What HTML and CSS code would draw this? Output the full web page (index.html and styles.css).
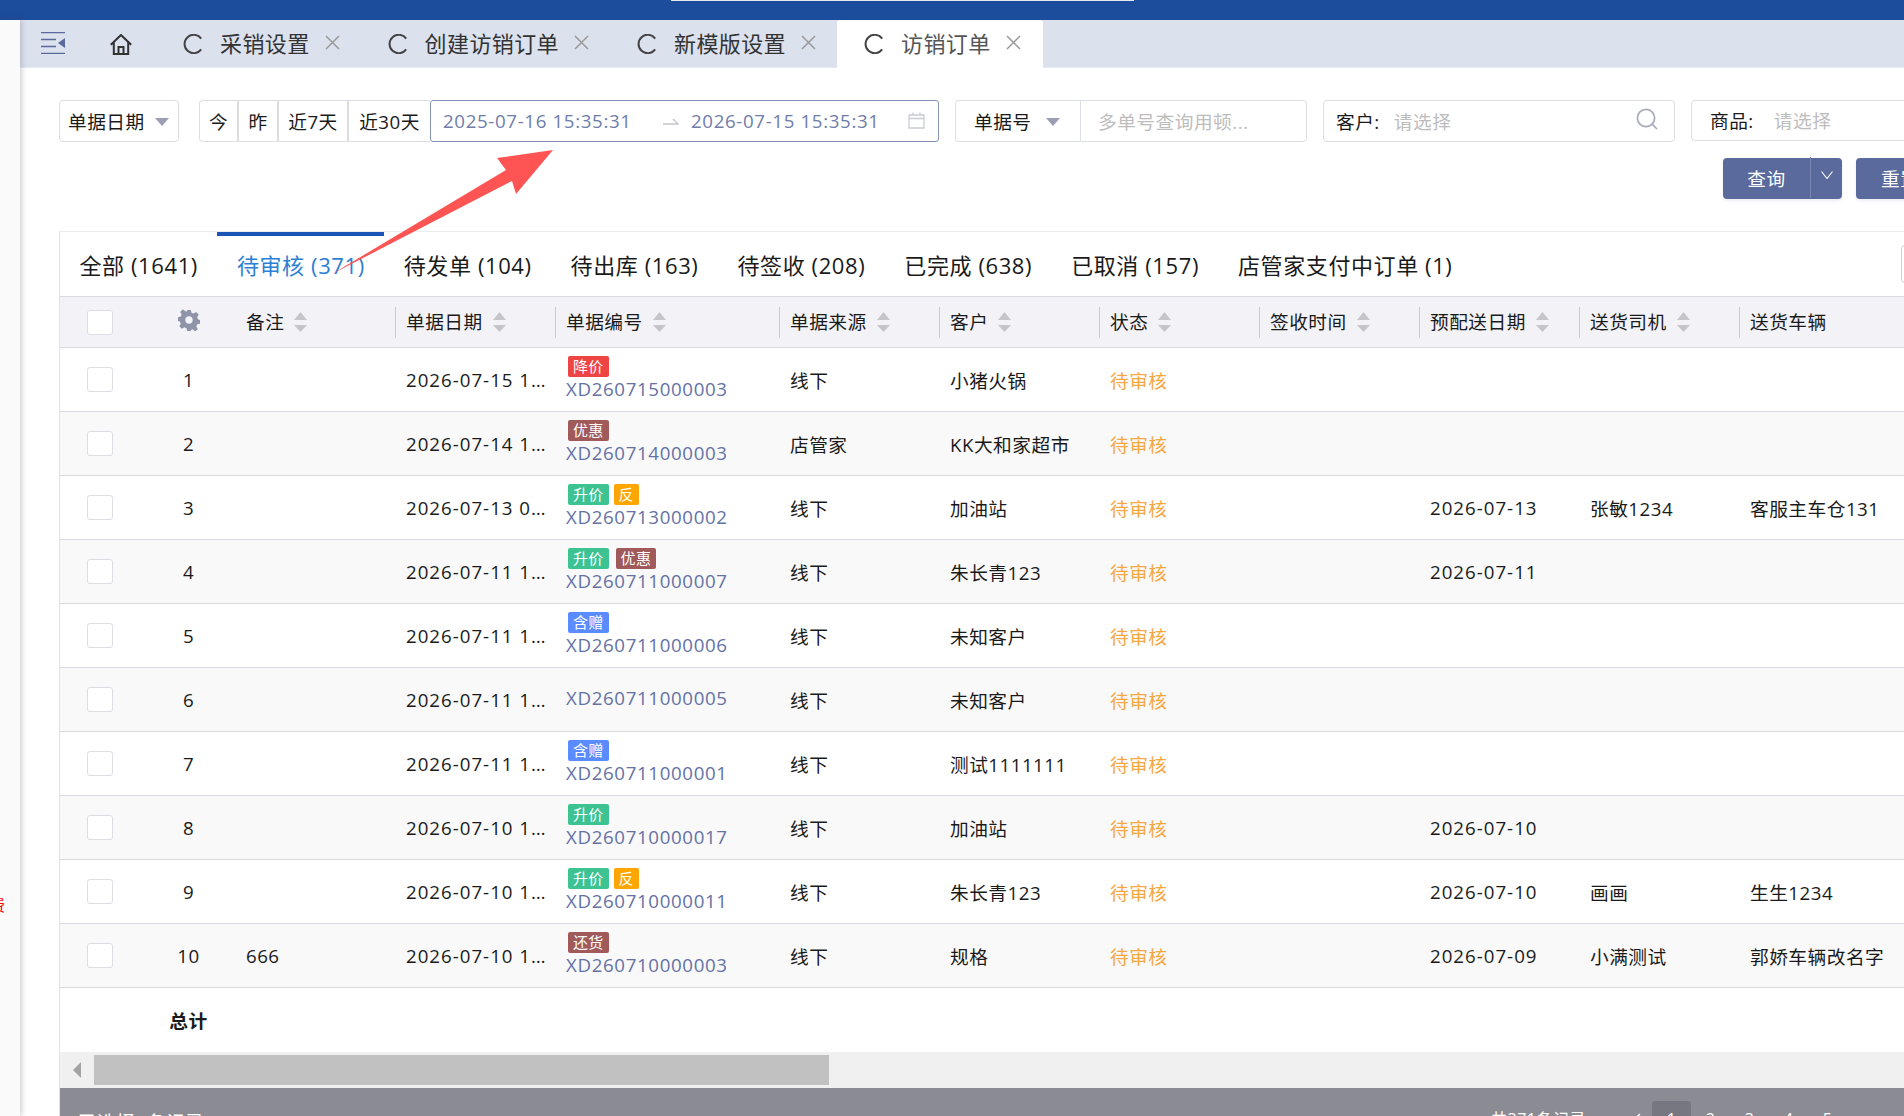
FILE: index.html
```html
<!DOCTYPE html>
<html lang="zh-CN">
<head>
<meta charset="utf-8">
<title>访销订单</title>
<link rel="stylesheet" href="styles.css">
</head>
<body>
<svg width="0" height="0" class="defs">
  <symbol id="i-c" viewBox="0 0 20 20"><path d="M18.200 4.600A9.200 9.200 0 1 0 18.200 15.400" fill="none" stroke="currentColor" stroke-width="2"/></symbol>
  <symbol id="i-x" viewBox="0 0 15 15"><path d="M1 1L14 14M14 1L1 14" fill="none" stroke="currentColor" stroke-width="1.5"/></symbol>
  <symbol id="i-sort" viewBox="0 0 13 20"><path d="M6.5 0L13 8H0Z M0 13H13L6.5 20Z" fill="#c6c6ca"/></symbol>
</svg>
<div class="topbar"><div class="topline"></div></div>
<div class="app">
  <aside class="side"><span class="frag">费</span></aside>
  <main class="main">
    <nav class="tabbar">
      <svg class="menu" width="24" height="22" viewBox="0 0 24 22"><path d="M0 .5H24M0 7.5H15M0 14.5H15M0 21.5H24" stroke="#5b6a9c" stroke-width="1.4" fill="none"/><path d="M24 6V16L17 11Z" fill="#5b6a9c"/></svg>
      <svg class="home" width="22" height="21" viewBox="0 0 22 21"><path d="M.8 10.800L11 1L21.200 10.800M3.800 8V20H18.200V8M8.500 20V13H13.500V20" fill="none" stroke="#333" stroke-width="2"/></svg>
      <div class="tab"><svg class="ic"><use href="#i-c"/></svg><span>采销设置</span><svg class="ix"><use href="#i-x"/></svg></div>
      <div class="tab"><svg class="ic"><use href="#i-c"/></svg><span>创建访销订单</span><svg class="ix"><use href="#i-x"/></svg></div>
      <div class="tab"><svg class="ic"><use href="#i-c"/></svg><span>新模版设置</span><svg class="ix"><use href="#i-x"/></svg></div>
      <div class="tab active"><svg class="ic"><use href="#i-c"/></svg><span>访销订单</span><svg class="ix"><use href="#i-x"/></svg></div>
    </nav>

    <section class="filters">
      <div class="box sel-date"><span>单据日期</span><i class="caret"></i></div>
      <div class="quick"><span class="q q1">今</span><span class="q q2">昨</span><span class="q q3">近7天</span><span class="q q4">近30天</span></div>
      <div class="range">
        <span class="rv">2025-07-16 15:35:31</span>
        <svg class="rarrow" width="16" height="8" viewBox="0 0 16 8"><path d="M0 7H15L10 2" fill="none" stroke="#c4c6ce" stroke-width="1.4"/></svg>
        <span class="rv">2026-07-15 15:35:31</span>
        <svg class="cal" width="17" height="17" viewBox="0 0 17 17"><path d="M1 3H16V16H1ZM1 6.500H16M5 .5V3M12 .5V3" fill="none" stroke="#c9ccd6" stroke-width="1.3"/></svg>
      </div>
      <div class="box sel-no"><span>单据号</span><i class="caret"></i></div>
      <div class="box input-no"><span class="ph">多单号查询用顿...</span></div>
      <div class="box cust"><span>客户:</span><span class="ph cust-ph">请选择</span>
        <svg class="search" width="22" height="22" viewBox="0 0 22 22"><circle cx="10" cy="10" r="8.600" fill="none" stroke="#a6a9bb" stroke-width="1.7"/><path d="M16 16L21 21" stroke="#a6a9bb" stroke-width="1.7"/></svg>
      </div>
      <div class="box goods"><span>商品:</span><span class="ph goods-ph">请选择</span></div>
    </section>

    <section class="actions">
      <div class="btn query"><span class="btn-t">查询</span><span class="btn-d"><svg width="12" height="8" viewBox="0 0 12 8"><path d="M.5 .5L6 7.500L11.500 .5" fill="none" stroke="#fff" stroke-width="1.1"/></svg></span></div>
      <div class="btn reset"><span>重置</span></div>
    </section>

    <section class="panel">
      <div class="status">
        <span class="st">全部 (1641)</span>
        <span class="st on">待审核 (371)</span>
        <span class="st">待发单 (104)</span>
        <span class="st">待出库 (163)</span>
        <span class="st">待签收 (208)</span>
        <span class="st">已完成 (638)</span>
        <span class="st">已取消 (157)</span>
        <span class="st">店管家支付中订单 (1)</span>
        <i class="st-end"></i>
      </div>
      <table class="grid">
        <colgroup><col class="c1"><col class="c2"><col class="c3"><col class="c3"><col class="c4"><col class="c3"><col class="c3"><col class="c3"><col class="c3"><col class="c3"><col class="c3"></colgroup>
        <thead>
          <tr>
            <th><i class="cb"></i></th>
            <th><svg class="gear" width="22" height="22" viewBox="0 0 24 24"><path fill="#8f93a8" fill-rule="evenodd" d="M10 1h4l.7 3 2.400 1 2.700-1.600 2.800 2.800L20.900 9l1 2.400 2.100.6v4l-3 .7-1 2.400 1.600 2.700-2.800 2.800L16 22l-2 .9-.0 1.100h-4l-.7-3-2.400-1-2.700 1.600-2.800-2.800L3 16l-1-2.400-2-.6V9l3-.7 1-2.400L2.400 3.200 5.200.4 9 3l1-.9zM12 8a4 4 0 1 0 0 8a4 4 0 0 0 0-8z"/></svg></th>
            <th><div class="h">备注<svg class="sort"><use href="#i-sort"/></svg></div></th>
            <th><div class="h">单据日期<svg class="sort"><use href="#i-sort"/></svg></div></th>
            <th><div class="h">单据编号<svg class="sort"><use href="#i-sort"/></svg></div></th>
            <th><div class="h">单据来源<svg class="sort"><use href="#i-sort"/></svg></div></th>
            <th><div class="h">客户<svg class="sort"><use href="#i-sort"/></svg></div></th>
            <th><div class="h">状态<svg class="sort"><use href="#i-sort"/></svg></div></th>
            <th><div class="h">签收时间<svg class="sort"><use href="#i-sort"/></svg></div></th>
            <th><div class="h">预配送日期<svg class="sort"><use href="#i-sort"/></svg></div></th>
            <th><div class="h">送货司机<svg class="sort"><use href="#i-sort"/></svg></div></th>
            <th><div class="h">送货车辆</div></th>
          </tr>
        </thead>
        <tbody>
          <tr><td><i class="cb"></i></td><td class="idx">1</td><td></td><td><div class="dt">2026-07-15 15:21:08</div></td><td><div class="tags"><b class="tag red">降价</b></div><a class="no">XD260715000003</a></td><td>线下</td><td>小猪火锅</td><td class="wait">待审核</td><td></td><td></td><td></td><td></td></tr>
          <tr><td><i class="cb"></i></td><td class="idx">2</td><td></td><td><div class="dt">2026-07-14 16:02:44</div></td><td><div class="tags"><b class="tag brown">优惠</b></div><a class="no">XD260714000003</a></td><td>店管家</td><td>KK大和家超市</td><td class="wait">待审核</td><td></td><td></td><td></td><td></td></tr>
          <tr><td><i class="cb"></i></td><td class="idx">3</td><td></td><td><div class="dt">2026-07-13 09:41:17</div></td><td><div class="tags"><b class="tag green">升价</b><b class="tag orange">反</b></div><a class="no">XD260713000002</a></td><td>线下</td><td>加油站</td><td class="wait">待审核</td><td></td><td class="d">2026-07-13</td><td>张敏1234</td><td>客服主车仓131</td></tr>
          <tr><td><i class="cb"></i></td><td class="idx">4</td><td></td><td><div class="dt">2026-07-11 17:33:20</div></td><td><div class="tags"><b class="tag green">升价</b><b class="tag brown second">优惠</b></div><a class="no">XD260711000007</a></td><td>线下</td><td>朱长青123</td><td class="wait">待审核</td><td></td><td class="d">2026-07-11</td><td></td><td></td></tr>
          <tr><td><i class="cb"></i></td><td class="idx">5</td><td></td><td><div class="dt">2026-07-11 16:18:52</div></td><td><div class="tags"><b class="tag blue">含赠</b></div><a class="no">XD260711000006</a></td><td>线下</td><td>未知客户</td><td class="wait">待审核</td><td></td><td></td><td></td><td></td></tr>
          <tr><td><i class="cb"></i></td><td class="idx">6</td><td></td><td><div class="dt">2026-07-11 15:47:03</div></td><td><a class="no">XD260711000005</a></td><td>线下</td><td>未知客户</td><td class="wait">待审核</td><td></td><td></td><td></td><td></td></tr>
          <tr><td><i class="cb"></i></td><td class="idx">7</td><td></td><td><div class="dt">2026-07-11 11:05:39</div></td><td><div class="tags"><b class="tag blue">含赠</b></div><a class="no">XD260711000001</a></td><td>线下</td><td>测试1111111</td><td class="wait">待审核</td><td></td><td></td><td></td><td></td></tr>
          <tr><td><i class="cb"></i></td><td class="idx">8</td><td></td><td><div class="dt">2026-07-10 18:26:11</div></td><td><div class="tags"><b class="tag green">升价</b></div><a class="no">XD260710000017</a></td><td>线下</td><td>加油站</td><td class="wait">待审核</td><td></td><td class="d">2026-07-10</td><td></td><td></td></tr>
          <tr><td><i class="cb"></i></td><td class="idx">9</td><td></td><td><div class="dt">2026-07-10 14:12:30</div></td><td><div class="tags"><b class="tag green">升价</b><b class="tag orange">反</b></div><a class="no">XD260710000011</a></td><td>线下</td><td>朱长青123</td><td class="wait">待审核</td><td></td><td class="d">2026-07-10</td><td>画画</td><td>生生1234</td></tr>
          <tr><td><i class="cb"></i></td><td class="idx">10</td><td>666</td><td><div class="dt">2026-07-10 10:09:45</div></td><td><div class="tags"><b class="tag brown">还货</b></div><a class="no">XD260710000003</a></td><td>线下</td><td>规格</td><td class="wait">待审核</td><td></td><td class="d">2026-07-09</td><td>小满测试</td><td>郭娇车辆改名字</td></tr>
        </tbody>
        <tfoot>
          <tr><td></td><td class="sum">总计</td><td colspan="10"></td></tr>
        </tfoot>
      </table>
      <div class="hscroll"><i class="hleft"></i><div class="hthumb"></div></div>
      <footer class="pager">
        <span class="sel">已选择0条记录</span>
        <span class="total">共371条记录</span>
        <svg class="prev" width="10" height="16" viewBox="0 0 10 16"><path d="M9 1L1.500 8L9 15" fill="none" stroke="#fff" stroke-width="1.4"/></svg>
        <span class="pg cur">1</span><span class="pg">2</span><span class="pg">3</span><span class="pg">4</span><span class="pg">5</span>
      </footer>
    </section>
  </main>
</div>
<svg class="callout" width="1904" height="1116" viewBox="0 0 1904 1116"><polygon points="553,150 497,158 506,170 332,274 512,181 516,194" fill="#ff5454"/></svg>
</body>
</html>
```
FILE: styles.css
```css
* { box-sizing: border-box; }
html, body { margin: 0; padding: 0; }
body {
  width: 1904px;
  height: 1116px;
  overflow: hidden;
  position: relative;
  background: #fff;
  color: #1a1a1a;
  font-family: "Open Sans", "Noto Sans CJK SC", sans-serif;
  font-size: 18.7px;
  letter-spacing: .5px;
}
i, b { font-style: normal; font-weight: normal; }
.defs { position: absolute; }

.topbar { height: 20px; background: #1c4c9c; }
.topline { width: 463px; height: 1px; margin-left: 671px; background: #e6e9f2; }

.app { display: flex; height: 1096px; }
.side {
  position: relative;
  z-index: 2;
  flex: 0 0 20px;
  background: #fafafa;
  box-shadow: 1px 0 6px rgba(60, 60, 80, .3);
  overflow: hidden;
}
.frag { position: absolute; left: -11px; top: 872px; color: #f00; font-size: 16px; }
.main { flex: 1; min-width: 0; overflow: hidden; }

/* tab bar */
.tabbar {
  display: flex;
  align-items: stretch;
  height: 48px;
  background: #dce1ee;
  border-bottom: 1px solid #e6e9f2;
}
.menu { margin: 12px 0 0 21px; flex: none; }
.home { margin: 14px 24px 0 45px; flex: none; }
.tab {
  display: flex;
  align-items: center;
  height: 48px;
  padding: 0 21px 4px 27px;
  font-size: 22px;
  letter-spacing: .4px;
  color: #333;
}
.tab.active { background: #fff; border-radius: 3px 3px 0 0; color: #555; padding-right: 22px; }
.ic { width: 20px; height: 20px; margin: 4px 17px 0 0; color: #444; flex: none; }
.ix { width: 15px; height: 15px; margin-left: 15px; color: #999; flex: none; }

/* filters */
.filters { display: flex; width: 1900px; margin: 32px 0 0 39px; height: 42px; }
.box {
  display: flex;
  align-items: center;
  height: 42px;
  padding-bottom: 2px;
  border: 1px solid #dcdee6;
  border-radius: 4px;
  flex: none;
}
.ph { color: #bdbdbd; }
.caret {
  width: 0; height: 0; flex: none;
  margin-top: 3px;
  border-left: 7px solid transparent;
  border-right: 7px solid transparent;
  border-top: 8px solid #9a9fb5;
}
.sel-date { width: 120px; padding-left: 8px; margin-right: 20px; }
.sel-date .caret { margin-left: 10px; }
.quick { display: flex; height: 42px; border: 1px solid #dcdee6; border-right: 0; border-radius: 4px 0 0 4px; flex: none; }
.q { display: flex; align-items: center; justify-content: center; border-right: 2px solid #dcdcdc; height: 40px; padding-bottom: 2px; }
.q1 { width: 39px; }
.q2 { width: 40px; }
.q3 { width: 70px; }
.q4 { width: 81px; border-right: 0; }
.range {
  display: flex;
  align-items: center;
  width: 509px;
  height: 42px;
  padding: 0 0 1px 12px;
  border: 1px solid #8592b8;
  border-radius: 3px;
  color: #6f7daa;
  letter-spacing: .65px;
  flex: none;
  margin-right: 16px;
}
.rv { width: 188px; white-space: nowrap; }
.rarrow { margin: 0 12px 0 32px; flex: none; }
.cal { margin-left: 29px; flex: none; }
.sel-no { width: 125px; padding-left: 18px; border-right: 0; border-radius: 4px 0 0 4px; }
.sel-no .caret { margin-left: 14px; }
.input-no { width: 227px; padding-left: 17px; border-radius: 0 4px 4px 0; margin-right: 16px; }
.cust { position: relative; width: 352px; padding-left: 12px; margin-right: 16px; }
.cust-ph { margin-left: 14px; }
.search { position: absolute; right: 16px; top: 7px; }
.goods { width: 260px; height: 41px; padding-left: 18px; }
.goods-ph { margin-left: 20px; }

/* action buttons */
.actions { display: flex; gap: 14px; margin: 16px 0 0 1703px; width: 300px; height: 41px; }
.btn {
  display: flex;
  align-items: center;
  height: 41px;
  padding-bottom: 2px;
  background: #5b6a9c;
  color: #fff;
  border-radius: 4px;
  box-shadow: 0 2px 3px rgba(91, 106, 156, .12);
  flex: none;
}
.btn-t { width: 87px; text-align: center; }
.btn-d {
  display: flex;
  justify-content: center;
  width: 32px;
  height: 41px;
  padding-top: 14px;
  border-left: 1px solid #7a87b0;
}
.btn-d svg { display: block; }
.reset { width: 100px; padding-left: 25px; }

/* panel */
.panel { margin: 32px 0 0 39px; width: 1900px; border-left: 1px solid #e2e3e8; }
.status {
  display: flex;
  position: relative;
  height: 66px;
  border-top: 1px solid #ececef;
  border-bottom: 1px solid #d8dae2;
  background: #fff;
  font-size: 22px;
  letter-spacing: .6px;
}
.st { display: flex; align-items: center; padding: 0 19.500px 4px; white-space: nowrap; border-top: 4px solid transparent; }
.st.on { color: #2b7fd4; border-top-color: #1c55b8; }
.st-end { position: absolute; left: 1841px; top: 13px; width: 30px; height: 38px; border: 1px solid #cfd1da; border-radius: 4px; }

.grid { border-collapse: separate; border-spacing: 0; table-layout: fixed; width: 1900px; }
.c1 { width: 79px; }
.c2 { width: 97px; }
.c3 { width: 160px; }
.c4 { width: 224px; }
.grid th {
  height: 51px;
  padding: 0;
  background: #f2f2f7;
  border-bottom: 1px solid #d8dae2;
  font-weight: normal;
  text-align: left;
  vertical-align: middle;
}
.grid th:nth-child(2) { padding-left: 2px; }
.h {
  display: flex;
  align-items: center;
  height: 31px;
  padding: 0 0 4px 10px;
  border-right: 1px solid #c8cad6;
  white-space: nowrap;
}
.sort { width: 13px; height: 20px; margin: 4px 0 0 10px; flex: none; }
.gear { display: block; margin: 0 auto 4px; }
.cb {
  display: block;
  width: 26px;
  height: 25px;
  margin-left: 27px;
  background: #fff;
  border: 1px solid #dcdee4;
  border-radius: 3px;
}
.grid td {
  height: 64px;
  padding: 0 10px 1px;
  border-bottom: 1px solid #d8dae2;
  white-space: nowrap;
  overflow: hidden;
  vertical-align: middle;
}
.grid td:first-child { padding: 0; }
.grid tbody tr:nth-child(even) td { background: #f9f9f9; }
.grid tfoot td { border-bottom: 0; }
.grid td.idx, .grid td.sum { text-align: center; padding-left: 12px; }
.sum { font-weight: 700; }
.dt { width: 142px; overflow: hidden; text-overflow: ellipsis; white-space: nowrap; letter-spacing: 1px; }
.d { letter-spacing: 1px; }
.no { display: block; color: #6472a5; line-height: 24px; margin-bottom: 2px; letter-spacing: .65px; }
.wait { color: #f5a742; }
.tags { display: flex; gap: 5px; margin-left: 2px; }
.tag {
  display: block;
  height: 21px;
  padding: 0 5px;
  border-radius: 2px;
  color: #fff;
  font-size: 15px;
  letter-spacing: .3px;
  line-height: 21px;
}
.second { margin-left: 2px; }
.red { background: #ee4444; }
.brown { background: #a05a5a; }
.green { background: #3cc391; }
.orange { background: #ffa500; }
.blue { background: #5b8cff; }

/* scrollbar + pager */
.hscroll { position: relative; height: 36px; padding: 3px 0 3px 34px; background: #f0f0f0; }
.hleft {
  position: absolute; left: 13px; top: 10px;
  width: 0; height: 0;
  border-top: 8px solid transparent;
  border-bottom: 8px solid transparent;
  border-right: 8px solid #a3a3a3;
}
.hthumb { width: 735px; height: 30px; background: #c1c1c1; }
.pager {
  display: flex;
  align-items: center;
  height: 39px;
  margin-top: 13px;
  color: #fff;
  font-size: 16px;
  position: relative;
  z-index: 0;
}
.pager::before { content: ""; position: absolute; z-index: -1; left: 0; right: 0; top: -13px; height: 60px; background: #8b8b94; }
.sel { width: 214px; margin-left: 18px; font-size: 18.7px; }
.total { width: 109px; margin-left: 1199px; white-space: nowrap; line-height: 36px; align-self: flex-start; }
.prev { margin: 0 11px 0 31px; flex: none; }
.pg { display: block; width: 39px; height: 39px; line-height: 36px; text-align: center; }
.cur { background: #767780; border-radius: 3px; }

.callout { position: absolute; left: 0; top: 0; pointer-events: none; z-index: 5; }
```
